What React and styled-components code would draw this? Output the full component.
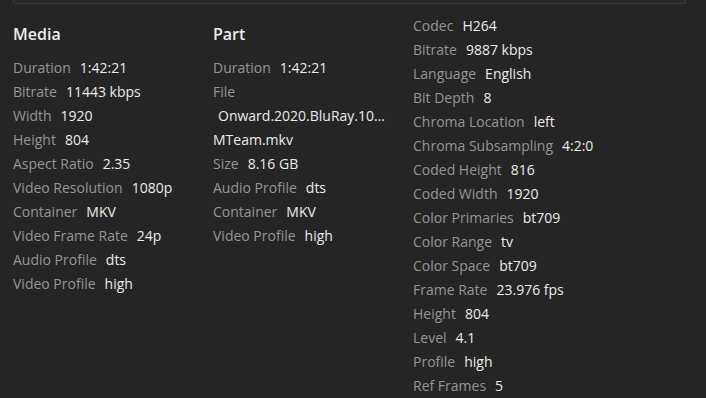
import React from "react";
import styled, { createGlobalStyle } from "styled-components";

const Global = createGlobalStyle`
  html, body { margin: 0; padding: 0; background: #252525; }
  body { font-family: "Open Sans", "Noto Sans", sans-serif; -webkit-font-smoothing: antialiased; }
`;

const Page = styled.div`
  width: 706px;
  height: 398px;
  overflow: hidden;
  background: #252525;
`;

const TopPanel = styled.div`
  height: 3px;
  margin: 0 20px 0 13px;
  background: #282828;
  border: 1px solid #3b3b3b;
  border-top: none;
  border-radius: 0 0 3px 3px;
`;

const Columns = styled.div`
  display: flex;
  padding: 10px 0 0 13px;
`;

const Column = styled.div`
  width: 200px;
  flex: none;
  padding-top: ${(p) => (p.$titled ? "8px" : "0")};
`;

const Title = styled.div`
  font-size: 16px;
  font-weight: 600;
  line-height: 24px;
  color: #ececec;
  margin-bottom: 10px;
`;

const Row = styled.div`
  display: flex;
  align-items: baseline;
  white-space: nowrap;
  height: 24px;
  line-height: 24px;
  font-size: 14px;
`;

const Label = styled.span`
  color: #969696;
  margin-right: 9px;
`;

const Value = styled.span`
  color: #ebebeb;
`;

const Line = styled.div`
  height: 24px;
  line-height: 24px;
  font-size: 14px;
  color: #ebebeb;
  white-space: nowrap;
  overflow: hidden;
  text-overflow: ellipsis;
  width: ${(p) => p.$width || "auto"};
  padding-left: ${(p) => p.$indent || "0"};
  box-sizing: border-box;
`;

const media = [
  ["Duration", "1:42:21"],
  ["Bitrate", "11443 kbps"],
  ["Width", "1920"],
  ["Height", "804"],
  ["Aspect Ratio", "2.35"],
  ["Video Resolution", "1080p"],
  ["Container", "MKV"],
  ["Video Frame Rate", "24p"],
  ["Audio Profile", "dts"],
  ["Video Profile", "high"],
];

const partAfter = [
  ["Size", "8.16 GB"],
  ["Audio Profile", "dts"],
  ["Container", "MKV"],
  ["Video Profile", "high"],
];

const video = [
  ["Codec", "H264"],
  ["Bitrate", "9887 kbps"],
  ["Language", "English"],
  ["Bit Depth", "8"],
  ["Chroma Location", "left"],
  ["Chroma Subsampling", "4:2:0"],
  ["Coded Height", "816"],
  ["Coded Width", "1920"],
  ["Color Primaries", "bt709"],
  ["Color Range", "tv"],
  ["Color Space", "bt709"],
  ["Frame Rate", "23.976 fps"],
  ["Height", "804"],
  ["Level", "4.1"],
  ["Profile", "high"],
  ["Ref Frames", "5"],
];

const Rows = ({ items }) =>
  items.map(([k, v], i) => (
    <Row key={k + i}>
      <Label>{k}</Label>
      <Value>{v}</Value>
    </Row>
  ));

export default function App() {
  return (
    <Page>
      <Global />
      <TopPanel />
      <Columns>
        <Column $titled>
          <Title>Media</Title>
          <Rows items={media} />
        </Column>
        <Column $titled>
          <Title>Part</Title>
          <Rows items={[["Duration", "1:42:21"]]} />
          <Row>
            <Label>File</Label>
          </Row>
          <Line $width="172px" $indent="5px">
            Onward.2020.BluRay.1080p.DTS.x264-MTeam.mkv
          </Line>
          <Line>MTeam.mkv</Line>
          <Rows items={partAfter} />
        </Column>
        <Column>
          <Rows items={video} />
        </Column>
      </Columns>
    </Page>
  );
}
